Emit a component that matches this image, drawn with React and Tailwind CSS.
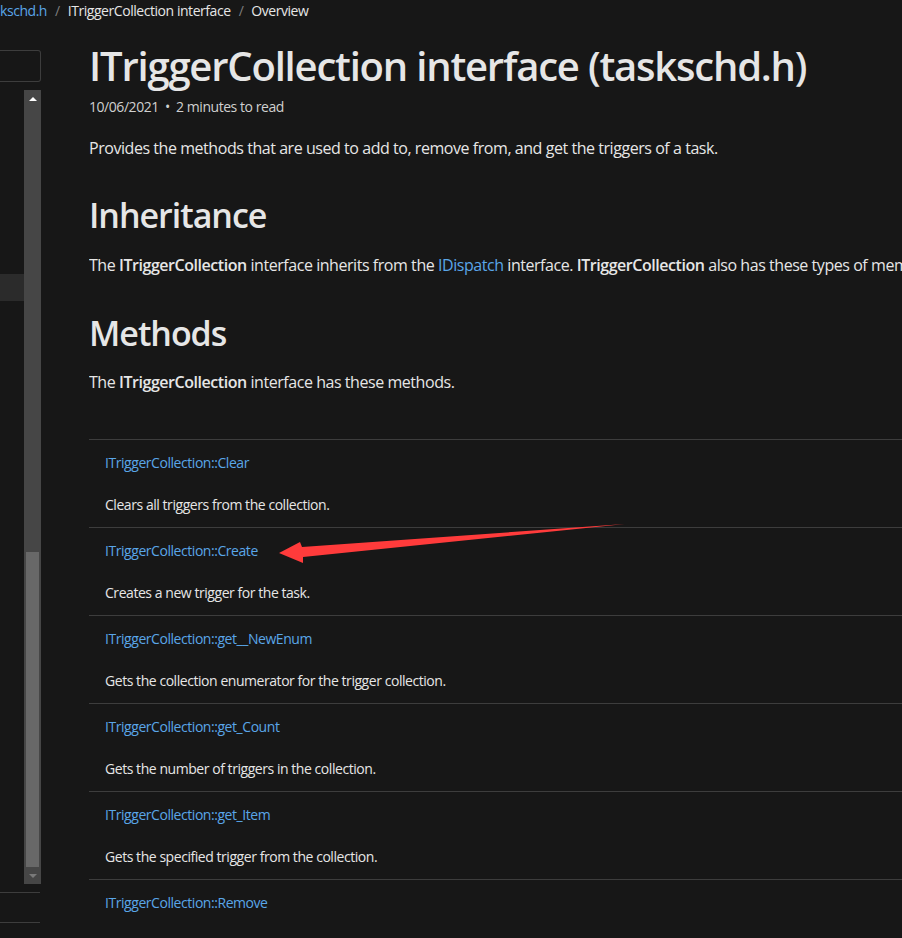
import React from 'react';

const METHODS = [
  { name: 'ITriggerCollection::Clear', desc: 'Clears all triggers from the collection.' },
  { name: 'ITriggerCollection::Create', desc: 'Creates a new trigger for the task.' },
  { name: 'ITriggerCollection::get__NewEnum', desc: 'Gets the collection enumerator for the trigger collection.' },
  { name: 'ITriggerCollection::get_Count', desc: 'Gets the number of triggers in the collection.' },
  { name: 'ITriggerCollection::get_Item', desc: 'Gets the specified trigger from the collection.' },
  { name: 'ITriggerCollection::Remove', desc: '' },
];

function Sidebar() {
  return (
    <div className="w-[41px] shrink-0 flex flex-col">
      {/* filter box */}
      <div className="mt-[29px] h-[32px] w-[41px] border border-[#3d3d3d] rounded-r-[3px] border-l-0"></div>

      <div className="mt-[8px] h-[794px] flex">
        <div className="w-[24px] flex flex-col">
          <div className="h-[184px]"></div>
          <div className="h-[27px] bg-[#2b2b2b]"></div>
        </div>
        {/* scrollbar */}
        <div className="w-[17px] bg-[#464646] flex flex-col items-center">
          <div className="h-[17px] flex items-center justify-center">
            <div className="w-0 h-0 border-l-[4px] border-r-[4px] border-b-[4px] border-l-transparent border-r-transparent border-b-white"></div>
          </div>
          <div className="h-[445px]"></div>
          <div className="w-[13px] h-[315px] bg-[#686868]"></div>
          <div className="h-[17px] flex items-center justify-center">
            <div className="w-0 h-0 border-l-[4px] border-r-[4px] border-t-[4px] border-l-transparent border-r-transparent border-t-[#7a7a7a]"></div>
          </div>
        </div>
      </div>

      <div className="mt-[8px] h-px w-[40px] bg-[#3d3d3d]"></div>
      <div className="mt-[29px] h-px w-[40px] bg-[#3d3d3d]"></div>
    </div>
  );
}

export default function App() {
  return (
    <div
      className="relative w-[902px] h-[938px] overflow-hidden bg-[#171717] text-[#e6e6e6] tracking-[-0.028em]"
      style={{ fontFamily: '"Open Sans", "Noto Sans", sans-serif' }}
    >
      {/* Breadcrumb */}
      <div className="h-[21px] flex items-center text-[14px] leading-[21px] whitespace-nowrap">
        <span className="text-[#5aa6e8]">kschd.h</span>
        <span className="mx-[8px] text-[#7d7d7d]">/</span>
        <span>ITriggerCollection interface</span>
        <span className="mx-[8px] text-[#7d7d7d]">/</span>
        <span>Overview</span>
      </div>

      <div className="flex">
        <Sidebar />

        <main className="ml-[48px] w-[813px] shrink-0 overflow-hidden">
          <h1 className="mt-[21px] text-[40px] leading-[48px] font-semibold whitespace-nowrap tracking-[-0.03em]">
            ITriggerCollection interface (taskschd.h)
          </h1>
          <div className="mt-[7px] text-[14px] leading-[20px] text-[#d0d0d0]">
            10/06/2021 <span className="mx-[3px]">•</span> 2 minutes to read
          </div>

          <p className="mt-[19px] text-[16px] leading-[24px]">
            Provides the methods that are used to add to, remove from, and get the triggers of a task.
          </p>

          <h2 className="mt-[34px] text-[34px] leading-[42px] font-semibold tracking-[-0.03em]">Inheritance</h2>
          <p className="mt-[17px] text-[16px] leading-[24px] whitespace-nowrap">
            The <b className="font-semibold">ITriggerCollection</b> interface inherits from the{' '}
            <span className="text-[#5aa6e8]">IDispatch</span> interface.{' '}
            <b className="font-semibold">ITriggerCollection</b> also has these types of members:
          </p>

          <h2 className="mt-[35px] text-[34px] leading-[42px] font-semibold tracking-[-0.03em]">Methods</h2>
          <p className="mt-[16px] text-[16px] leading-[24px]">
            The <b className="font-semibold">ITriggerCollection</b> interface has these methods.
          </p>

          <div className="mt-[45px]">
            {METHODS.map((m) => (
              <div key={m.name} className="border-t border-[#3d3d3d] h-[88px] px-[16px] pt-[13px] text-[14px] leading-[20px]">
                <div className="text-[#5aa6e8]">{m.name}</div>
                <div className="mt-[22px]">{m.desc}</div>
              </div>
            ))}
          </div>
        </main>
      </div>

      {/* annotation arrow */}
      <svg className="absolute left-0 top-0 pointer-events-none" width="902" height="938">
        <polygon
          points="279,553 300,542 302,547 625,524 303,557 303,563"
          fill="#ff3b3b"
        />
      </svg>
    </div>
  );
}
